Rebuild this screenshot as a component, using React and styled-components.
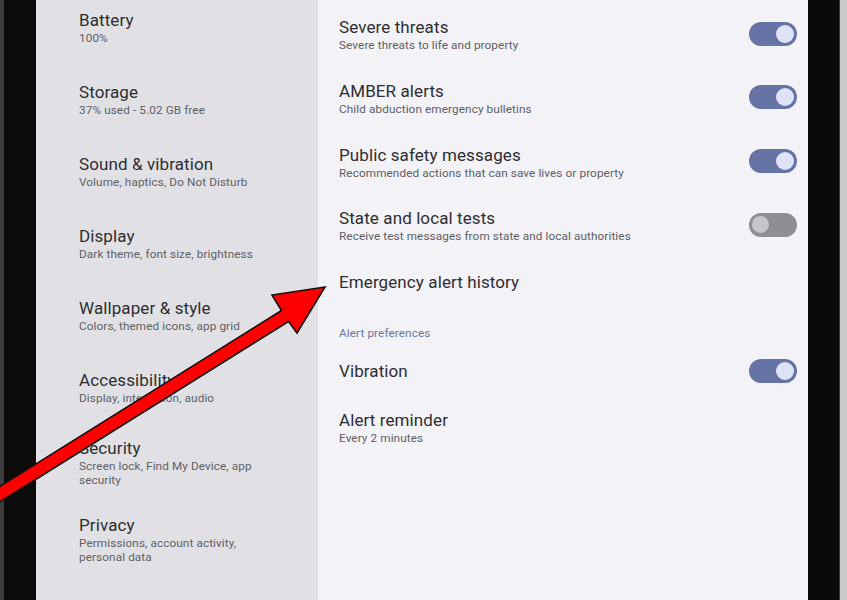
import React from "react";
import styled, { createGlobalStyle } from "styled-components";

const Global = createGlobalStyle`
  html, body { margin: 0; padding: 0; }
  body {
    width: 847px;
    height: 600px;
    overflow: hidden;
    background: #0b0b0c;
    font-family: Roboto, "Noto Sans", "Liberation Sans", sans-serif;
    -webkit-font-smoothing: antialiased;
  }
`;

const Screen = styled.div`
  position: relative;
  display: flex;
  width: 847px;
  height: 600px;
  overflow: hidden;
`;

const Bezel = styled.div`
  flex: 0 0 ${(p) => p.$w}px;
  background: ${(p) => p.$bg};
`;

const LeftPane = styled.div`
  flex: 0 0 282px;
  background: #e1e1e5;
  overflow: hidden;
`;

const RightPane = styled.div`
  flex: 0 0 490px;
  background: #f3f2f7;
  overflow: hidden;
`;

const NavList = styled.div`
  display: flex;
  flex-direction: column;
  margin-top: -9px;
  padding-left: 43px;
`;

const NavItem = styled.div`
  width: 192px;
  padding-top: ${(p) => p.$pt}px;
  padding-bottom: ${(p) => p.$pb}px;
`;

const Title = styled.div`
  font-size: 17px;
  line-height: 22px;
  color: #2e2e32;
  letter-spacing: 0.1px;
`;

const Sub = styled.div`
  font-size: 11.75px;
  line-height: 14px;
  color: #606065;
  letter-spacing: 0.1px;
`;

const SettingsList = styled.div`
  display: flex;
  flex-direction: column;
  padding: 2px 11px 0 21px;
`;

const Row = styled.div`
  display: flex;
  align-items: center;
  justify-content: space-between;
  padding-top: ${(p) => p.$pt}px;
  padding-bottom: ${(p) => p.$pb}px;
`;

const RowText = styled.div`
  display: flex;
  flex-direction: column;
`;

const SectionHeader = styled.div`
  font-size: 11.75px;
  line-height: 14px;
  color: #6a77a6;
  padding: 20px 0 5px;
  letter-spacing: 0.1px;
`;

const Track = styled.div`
  display: flex;
  align-items: center;
  justify-content: ${(p) => (p.$on ? "flex-end" : "flex-start")};
  box-sizing: border-box;
  width: 48px;
  height: 24px;
  padding: 0 3px;
  margin-bottom: ${(p) => p.$lift}px;
  border-radius: 12px;
  background: ${(p) => (p.$on ? "#6673a5" : "#8f8e93")};
  flex-shrink: 0;
`;

const Thumb = styled.div`
  width: ${(p) => (p.$on ? 18 : 17)}px;
  height: ${(p) => (p.$on ? 18 : 17)}px;
  border-radius: 50%;
  background: ${(p) => (p.$on ? "#dfe3f8" : "#c6c5ca")};
`;

const Overlay = styled.svg`
  position: absolute;
  left: 0;
  top: 0;
  width: 847px;
  height: 600px;
  pointer-events: none;
`;

const Toggle = ({ on, lift = 0 }) => (
  <Track $on={on} $lift={lift}>
    <Thumb $on={on} />
  </Track>
);

const nav = [
  { t: "Battery", s: ["100%"], pt: 18, pb: 18 },
  { t: "Storage", s: ["37% used - 5.02 GB free"], pt: 18, pb: 18 },
  { t: "Sound & vibration", s: ["Volume, haptics, Do Not Disturb"], pt: 18, pb: 18 },
  { t: "Display", s: ["Dark theme, font size, brightness"], pt: 18, pb: 18 },
  { t: "Wallpaper & style", s: ["Colors, themed icons, app grid"], pt: 18, pb: 18 },
  { t: "Accessibility", s: ["Display, interaction, audio"], pt: 18, pb: 18 },
  { t: "Security", s: ["Screen lock, Find My Device, app", "security"], pt: 14, pb: 14 },
  { t: "Privacy", s: ["Permissions, account activity,", "personal data"], pt: 13, pb: 14 },
  { t: "Safety & emergency", s: ["Emergency SOS, medical info, alerts"], pt: 18, pb: 18 },
];

const alerts = [
  { t: "Severe threats", s: "Severe threats to life and property", on: true },
  { t: "AMBER alerts", s: "Child abduction emergency bulletins", on: true },
  { t: "Public safety messages", s: "Recommended actions that can save lives or property", on: true },
  { t: "State and local tests", s: "Receive test messages from state and local authorities", on: false },
];

export default function App() {
  return (
    <>
      <Global />
      <Screen>
        <Bezel $w={36} $bg="linear-gradient(to right, #3d3d3f 0 4px, #0b0b0c 4px)" />
        <LeftPane>
          <NavList>
            {nav.map((n) => (
              <NavItem key={n.t} $pt={n.pt} $pb={n.pb}>
                <Title>{n.t}</Title>
                {n.s.map((line) => (
                  <Sub key={line}>{line}</Sub>
                ))}
              </NavItem>
            ))}
          </NavList>
        </LeftPane>
        <RightPane>
          <SettingsList>
            {alerts.map((a) => (
              <Row key={a.t} $pt={14} $pb={13.75}>
                <RowText>
                  <Title>{a.t}</Title>
                  <Sub>{a.s}</Sub>
                </RowText>
                <Toggle on={a.on} lift={1} />
              </Row>
            ))}
            <Row $pt={14} $pb={13}>
              <RowText>
                <Title>Emergency alert history</Title>
              </RowText>
            </Row>
            <SectionHeader>Alert preferences</SectionHeader>
            <Row $pt={14} $pb={14}>
              <RowText>
                <Title>Vibration</Title>
              </RowText>
              <Toggle on />
            </Row>
            <Row $pt={12} $pb={14}>
              <RowText>
                <Title>Alert reminder</Title>
                <Sub>Every 2 minutes</Sub>
              </RowText>
            </Row>
          </SettingsList>
        </RightPane>
        <Bezel $w={39} $bg="linear-gradient(to right, #0b0a0b 0 31px, #3a3a3a 31px 32px, #c9c9c9 32px)" />
        <Overlay viewBox="0 0 847 600">
          <polygon
            points="-23.5,501 281.5,310.5 272,295 325,287 297,333 288.5,321.5 -16.5,512"
            fill="#ff0000"
            stroke="#111"
            strokeWidth="1.6"
            strokeLinejoin="miter"
          />
        </Overlay>
      </Screen>
    </>
  );
}
